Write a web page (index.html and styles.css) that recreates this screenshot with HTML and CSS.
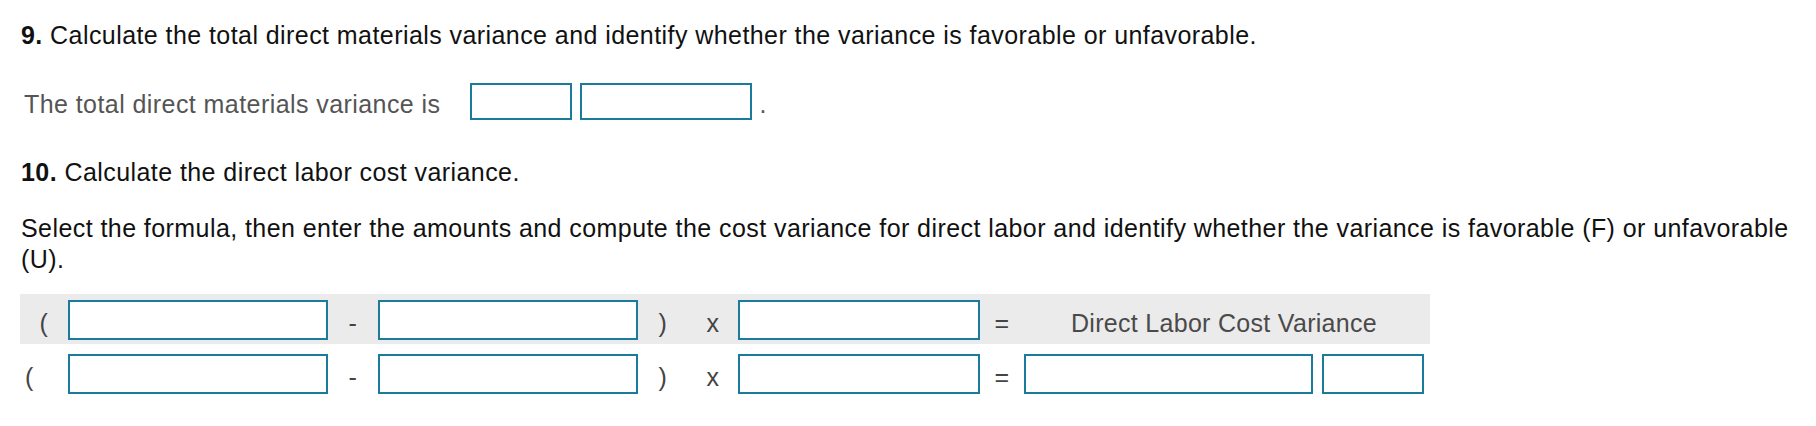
FILE: index.html
```html
<!DOCTYPE html>
<html lang="en">
<head>
<meta charset="utf-8">
<title>Variance questions</title>
<link rel="stylesheet" href="styles.css">
</head>
<body>
<div class="page">
  <p class="q q9"><b>9.</b> Calculate the total direct materials variance and identify whether the variance is favorable or unfavorable.</p>
  <div class="answer-line">
    <span class="answer-text">The total direct materials variance is</span>
    <span class="box box-sm"></span>
    <span class="box box-md"></span>
    <span class="period">.</span>
  </div>
  <p class="q q10"><b>10.</b> Calculate the direct labor cost variance.</p>
  <p class="q q-select">Select the formula, then enter the amounts and compute the cost variance for direct labor and identify whether the variance is favorable (F) or unfavorable (U).</p>
  <div class="formula">
    <div class="frow frow-head">
      <span class="sym paren-open">(</span>
      <span class="box box-lg"></span>
      <span class="sym">-</span>
      <span class="box box-lg"></span>
      <span class="sym">)</span>
      <span class="sym">x</span>
      <span class="box box-mid"></span>
      <span class="sym">=</span>
      <span class="sym label">Direct Labor Cost Variance</span>
    </div>
    <div class="frow frow-body">
      <span class="sym paren-open left">(</span>
      <span class="box box-lg"></span>
      <span class="sym">-</span>
      <span class="box box-lg"></span>
      <span class="sym">)</span>
      <span class="sym">x</span>
      <span class="box box-mid"></span>
      <span class="sym">=</span>
      <span class="result">
        <span class="box box-res"></span>
        <span class="box box-fu"></span>
      </span>
    </div>
  </div>
</div>
</body>
</html>
```

FILE: styles.css
```css
html, body {
  margin: 0;
  padding: 0;
  background: #ffffff;
}

.page {
  padding: 20px 8px 0 21px;
  font-family: "Liberation Sans", Arial, Helvetica, sans-serif;
  font-size: 25px;
  line-height: 31px;
  letter-spacing: 0.43px;
  color: #111111;
}

.q {
  margin: 0;
}

.q b {
  font-weight: bold;
}

.answer-line {
  display: flex;
  align-items: flex-start;
  margin-top: 32px;
  padding-left: 3px;
}

.answer-text {
  color: #555555;
  margin-top: 6px;
  margin-right: 29px;
}

.period {
  color: #555555;
  margin-top: 6px;
  margin-left: 8px;
}

.box {
  display: block;
  box-sizing: border-box;
  border: 2px solid #1a7b9c;
  background: #ffffff;
}

.box-sm {
  width: 102px;
  height: 37px;
}

.box-md {
  width: 172px;
  height: 37px;
  margin-left: 8px;
}

.q10 {
  margin-top: 37px;
}

.q-select {
  margin-top: 25px;
}

.formula {
  margin-top: 19px;
  margin-left: -1px;
}

.frow {
  display: grid;
  grid-template-columns: 48px 260px 50px 260px 50px 50px 242px 44px 400px;
  width: 1404px;
  color: #444444;
}

.frow-head {
  background: #ebebeb;
  padding: 6px 6px 4px 0;
}

.frow-body {
  padding-top: 10px;
}

.sym {
  box-sizing: border-box;
  height: 40px;
  padding-top: 6px;
  display: flex;
  align-items: center;
  justify-content: center;
}

.sym.left {
  justify-content: flex-start;
  padding-left: 5px;
}

.label {
  color: #4a4a4a;
  letter-spacing: 0.3px;
}

.box-lg {
  width: 260px;
  height: 40px;
}

.box-mid {
  width: 242px;
  height: 40px;
}

.result {
  display: flex;
  gap: 9px;
}

.box-res {
  width: 289px;
  height: 40px;
}

.box-fu {
  width: 102px;
  height: 40px;
}
```
